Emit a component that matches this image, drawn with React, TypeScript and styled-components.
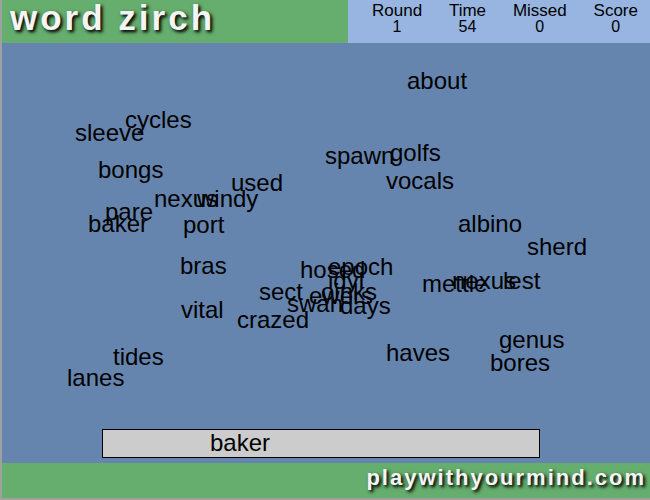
import React from "react";
import styled, { createGlobalStyle } from "styled-components";

const GlobalStyle = createGlobalStyle`
  * { box-sizing: border-box; }
  body { margin: 0; background: #a0a0a0; font-family: "Liberation Sans", Arial, sans-serif; color: #000; }
`;

const Game = styled.div`
  display: flex;
  flex-direction: column;
  min-height: 100vh;
  border-left: 2px solid #a0a0a0;
  border-bottom: 2px solid #a0a0a0;
  background: #6685ae;
`;

const Header = styled.header`
  display: flex;
  height: 43px;
  background: #66ae6d;
`;

const Title = styled.h1`
  flex: 1;
  margin: 0;
  padding-left: 8px;
  font-size: 35px;
  line-height: 36px;
  letter-spacing: 3px;
  white-space: nowrap;
  color: #f4f4f4;
  text-shadow: 2px 2px 3px rgba(0, 0, 0, 0.9), 2px 2px 4px rgba(0, 0, 0, 0.4);
`;

const Scoreboard = styled.dl`
  display: flex;
  justify-content: space-between;
  width: 302px;
  margin: 0;
  padding: 3px 12px 0 24px;
  background: #97b5e0;
  font-size: 16px;
  line-height: 16px;
  text-align: center;
`;

const Stat = styled.div``;
const StatName = styled.dt`
  font-size: 17px;
`;
const StatValue = styled.dd`
  margin: 0;
`;

const Field = styled.main`
  position: relative;
  display: flex;
  flex: 1;
  flex-direction: column;
  justify-content: flex-end;
  padding: 0 110px 5px 100px;
`;

const Word = styled.span<{ $x: number; $y: number }>`
  position: absolute;
  left: ${(p) => p.$x}px;
  top: ${(p) => p.$y}px;
  font-size: 24px;
  line-height: 28px;
`;

const Guess = styled.input`
  width: 100%;
  height: 29px;
  padding: 0 0 2px 107px;
  border: 1px solid #000;
  border-radius: 0;
  outline: none;
  background: #ccc;
  color: #000;
  font-family: inherit;
  font-size: 24px;
`;

const Footer = styled.footer`
  display: flex;
  justify-content: flex-end;
  height: 35px;
  padding-right: 4px;
  background: #66ae6d;
`;

const SiteLink = styled.a`
  font-size: 22px;
  font-weight: bold;
  line-height: 30px;
  letter-spacing: 2px;
  color: #f4f4f4;
  text-decoration: none;
  text-shadow: 2px 2px 3px rgba(0, 0, 0, 0.9), 2px 2px 4px rgba(0, 0, 0, 0.4);
`;

const stats = [
  { name: "Round", value: 1 },
  { name: "Time", value: 54 },
  { name: "Missed", value: 0 },
  { name: "Score", value: 0 },
];

const words: [string, number, number][] = [
  ["about", 405, 24],
  ["cycles", 123, 63],
  ["sleeve", 73, 76],
  ["bongs", 96, 113],
  ["used", 229, 126],
  ["nexus", 152, 142],
  ["windy", 195, 142],
  ["pare", 103, 155],
  ["baker", 86, 167],
  ["port", 181, 168],
  ["spawn", 323, 99],
  ["golfs", 388, 96],
  ["vocals", 384, 124],
  ["albino", 456, 167],
  ["sherd", 525, 190],
  ["mettle", 420, 227],
  ["nexus", 450, 224],
  ["lest", 501, 224],
  ["bras", 178, 209],
  ["hosed", 298, 213],
  ["epoch", 326, 210],
  ["idyl", 326, 224],
  ["sect", 257, 235],
  ["oinks", 319, 235],
  ["ewers", 307, 239],
  ["swan", 285, 247],
  ["days", 338, 249],
  ["vital", 179, 253],
  ["crazed", 235, 263],
  ["haves", 384, 296],
  ["genus", 497, 283],
  ["bores", 488, 306],
  ["tides", 111, 300],
  ["lanes", 65, 321],
];

export default function App() {
  return (
    <>
      <GlobalStyle />
      <Game>
        <Header>
          <Title>word zirch</Title>
          <Scoreboard>
            {stats.map((s) => (
              <Stat key={s.name}>
                <StatName>{s.name}</StatName>
                <StatValue>{s.value}</StatValue>
              </Stat>
            ))}
          </Scoreboard>
        </Header>
        <Field>
          {words.map(([text, x, y], i) => (
            <Word key={i} $x={x} $y={y}>
              {text}
            </Word>
          ))}
          <Guess type="text" aria-label="Your word" defaultValue="baker" />
        </Field>
        <Footer>
          <SiteLink href="#">playwithyourmind.com</SiteLink>
        </Footer>
      </Game>
    </>
  );
}
